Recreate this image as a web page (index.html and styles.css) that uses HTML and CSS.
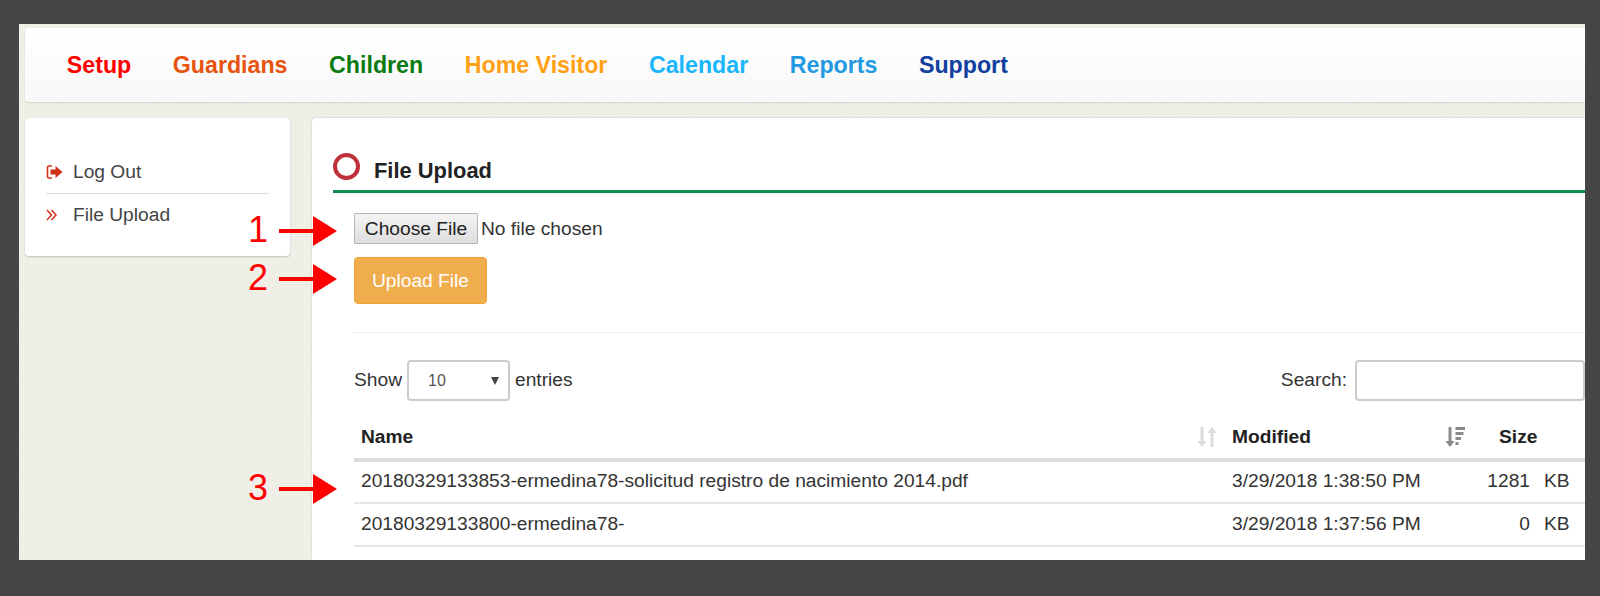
FILE: index.html
```html
<!DOCTYPE html>
<html lang="en">
<head>
    <meta charset="UTF-8">
    <meta name="viewport" content="width=device-width, initial-scale=1.0">
    <title>File Upload</title>
    <link rel="stylesheet" href="styles.css">
</head>
<body>
    <div class="frame">
        <!-- top menu -->
        <nav class="topnav">
            <a class="nav-setup" href="#">Setup</a>
            <a class="nav-guardians" href="#">Guardians</a>
            <a class="nav-children" href="#">Children</a>
            <a class="nav-visitor" href="#">Home Visitor</a>
            <a class="nav-calendar" href="#">Calendar</a>
            <a class="nav-reports" href="#">Reports</a>
            <a class="nav-support" href="#">Support</a>
        </nav>

        <div class="columns">
            <!-- side menu -->
            <aside class="sidebar">
                <a class="side-item side-item-first" href="#">
                    <svg class="side-icon" width="17" height="16" viewBox="0 0 17 16">
                        <path d="M6 2H3Q1.500 2 1.500 3.500V12.500Q1.500 14 3 14H6" fill="none" stroke="#d0311a" stroke-width="1.600"/>
                        <path d="M4.500 5.500H9.500V2L16.500 8L9.500 14V10.500H4.500Z" fill="#d0311a"/>
                    </svg>
                    Log Out
                </a>
                <a class="side-item" href="#">
                    <svg class="side-icon" width="17" height="16" viewBox="0 0 17 16">
                        <path d="M1 3L5.500 8L1 13M5.500 3L10 8L5.500 13" fill="none" stroke="#d0311a" stroke-width="1.500"/>
                    </svg>
                    File Upload
                </a>
            </aside>

            <main class="content">
                <h2 class="page-title"><span class="title-ring"></span>File Upload</h2>

                <div class="panel">
                    <input class="file-input" type="file">
                    <button class="upload-btn" type="button">Upload File</button>
                    <hr class="divider">

                    <div class="table-tools">
                        <label class="tool">Show
                            <span class="select-box">
                                <select class="entries">
                                    <option>10</option>
                                    <option>25</option>
                                    <option>50</option>
                                </select>
                            </span>
                            entries
                        </label>
                        <label class="tool">Search:
                            <input class="search" type="text">
                        </label>
                    </div>

                    <table class="files">
                        <colgroup>
                            <col class="col-name">
                            <col class="col-modified">
                            <col class="col-size">
                        </colgroup>
                        <thead>
                            <tr>
                                <th>
                                    <div class="th-inner">Name
                                        <svg width="20" height="22" viewBox="0 0 20 22">
                                            <path d="M3.500 1H6.500V15H9.500L5 21L0.500 15H3.500Z" fill="#dcdcdc"/>
                                            <path d="M13.500 21H16.500V7H19.500L15 1L10.500 7H13.500Z" fill="#dcdcdc"/>
                                        </svg>
                                    </div>
                                </th>
                                <th>
                                    <div class="th-inner">Modified
                                        <svg width="20" height="22" viewBox="0 0 20 22">
                                            <path d="M3.500 1H6.500V15H9.500L5 21L0.500 15H3.500Z" fill="#8a8a8a"/>
                                            <path d="M10.500 1H20V4H10.500ZM10.500 6H18.500V9H10.500ZM10.500 11H16V14H10.500ZM10.500 16H13.500V19H10.500Z" fill="#8a8a8a"/>
                                        </svg>
                                    </div>
                                </th>
                                <th class="th-size">Size</th>
                            </tr>
                        </thead>
                        <tbody>
                            <tr>
                                <td>20180329133853-ermedina78-solicitud registro de nacimiento 2014.pdf</td>
                                <td>3/29/2018 1:38:50 PM</td>
                                <td><div class="size-cell"><span class="size-num">1281</span>KB</div></td>
                            </tr>
                            <tr>
                                <td>20180329133800-ermedina78-</td>
                                <td>3/29/2018 1:37:56 PM</td>
                                <td><div class="size-cell"><span class="size-num">0</span>KB</div></td>
                            </tr>
                        </tbody>
                    </table>
                </div>
            </main>
        </div>

        <!-- red callouts drawn on top of the page -->
        <div class="callout callout-1">
            <span class="callout-num">1</span>
            <svg width="58" height="30" viewBox="0 0 58 30"><path d="M0 13H34V0L58 15L34 30V17H0Z" fill="#ff0000"/></svg>
        </div>
        <div class="callout callout-2">
            <span class="callout-num">2</span>
            <svg width="58" height="30" viewBox="0 0 58 30"><path d="M0 13H34V0L58 15L34 30V17H0Z" fill="#ff0000"/></svg>
        </div>
        <div class="callout callout-3">
            <span class="callout-num">3</span>
            <svg width="58" height="30" viewBox="0 0 58 30"><path d="M0 13H34V0L58 15L34 30V17H0Z" fill="#ff0000"/></svg>
        </div>
    </div>
</body>
</html>
```

FILE: styles.css
```css
html, body {
    height: 100%;
}
body {
    margin: 0;
    padding: 24px 15px 36px 19px;
    box-sizing: border-box;
    background-color: #454545;
    font-family: "Liberation Sans", Arial, sans-serif;
    font-size: 19.2px;
    color: #333;
    overflow: hidden;
}
.frame {
    position: relative;
    height: 536px;
    padding: 4px 0 0 6px;
    box-sizing: border-box;
    background-color: #eeeee5;
    background-image: url("data:image/svg+xml,%3Csvg xmlns='http://www.w3.org/2000/svg' width='300' height='300'%3E%3Cfilter id='n'%3E%3CfeTurbulence type='fractalNoise' baseFrequency='0.7' numOctaves='2'/%3E%3CfeColorMatrix values='0 0 0 0 1 0 0 0 0 1 0 0 0 0 1 0 0 0 0.5 -0.1'/%3E%3C/filter%3E%3Crect width='300' height='300' filter='url(%23n)' opacity='0.35'/%3E%3C/svg%3E");
    overflow: hidden;
}

/* top menu */
.topnav {
    display: flex;
    align-items: center;
    height: 74px;
    padding-left: 21px;
    background: linear-gradient(to bottom, #fff, #f8f8f8);
    border-radius: 4px 0 0 4px;
    box-shadow: 0 1px 2px rgba(0, 0, 0, 0.12);
    font-size: 23.2px;
    font-weight: bold;
}
.topnav a {
    padding: 0 20.8px;
    text-decoration: none;
}
.nav-setup { color: #ff0000; }
.nav-guardians { color: #e6540f; }
.nav-children { color: #0a7a12; }
.nav-visitor { color: #ff9f14; }
.nav-calendar { color: #19b6fb; }
.nav-reports { color: #2399e2; }
.nav-support { color: #103f9f; }

.columns {
    display: flex;
    gap: 22px;
    margin-top: 16px;
}

/* side menu */
.sidebar {
    flex: 0 0 265px;
    height: 138px;
    padding: 33px 21px 0;
    box-sizing: border-box;
    background-color: #fff;
    border-radius: 4px;
    box-shadow: 0 1px 2px rgba(0, 0, 0, 0.2);
}
.side-item {
    display: flex;
    align-items: center;
    height: 42px;
    color: #444;
    text-decoration: none;
}
.side-item-first {
    border-bottom: 1px solid #ddd;
}
.side-icon {
    margin-right: 10px;
}

/* main card */
.content {
    flex: 1;
    min-width: 0;
    height: 442px;
    padding-top: 34px;
    box-sizing: border-box;
    background-color: #fff;
    border-radius: 4px 0 0 0;
    box-shadow: 0 0 2px rgba(0, 0, 0, 0.2);
}
.page-title {
    display: flex;
    align-items: center;
    height: 38px;
    margin: 0 0 0 21px;
    border-bottom: 3px solid #0f8a50;
    font-size: 21.9px;
    font-weight: bold;
    color: #222;
}
.title-ring {
    width: 27px;
    height: 27px;
    margin: 0 14px 9px 0;
    box-sizing: border-box;
    border: 4px solid #c0303a;
    border-radius: 50%;
}
.panel {
    padding: 20px 0 0 42px;
}
.file-input {
    display: block;
    height: 31px;
    font-family: "Liberation Sans", Arial, sans-serif;
    font-size: 19.2px;
    color: #333;
}
.file-input::file-selector-button {
    width: 124px;
    height: 31px;
    margin-right: 3px;
    background: linear-gradient(to bottom, #f4f4f4, #dedede);
    border: 1px solid #b5b5b5;
    border-radius: 1px;
    font: inherit;
    color: #222;
}
.upload-btn {
    display: block;
    width: 133px;
    height: 47px;
    margin-top: 13px;
    background-color: #f0ad4e;
    border: 1px solid #eea236;
    border-radius: 4px;
    font-family: "Liberation Sans", Arial, sans-serif;
    font-size: 19.2px;
    color: #fff;
}
.divider {
    height: 1px;
    margin: 28px 0 27px;
    background-color: #eee;
    border: 0;
}
.table-tools {
    display: flex;
    justify-content: space-between;
    height: 40px;
}
.tool {
    display: flex;
    align-items: center;
    gap: 5px;
}
.select-box {
    position: relative;
    display: block;
}
.select-box::after {
    content: "";
    position: absolute;
    top: 17px;
    right: 11px;
    border-top: 8px solid #444;
    border-left: 4px solid transparent;
    border-right: 4px solid transparent;
}
.entries {
    display: block;
    width: 103px;
    height: 41px;
    padding-left: 19px;
    appearance: none;
    background-color: #fff;
    border: 2px solid #ccc;
    border-radius: 4px;
    font-family: "Liberation Sans", Arial, sans-serif;
    font-size: 16px;
    color: #555;
}
.search {
    width: 230px;
    height: 41px;
    margin: 0 0 0 3px;
    box-sizing: border-box;
    border: 2px solid #ccc;
    border-radius: 4px;
}

/* file table */
.files {
    width: 100%;
    margin-top: 13px;
    border-collapse: collapse;
    table-layout: fixed;
}
.col-name { width: 871px; }
.col-modified { width: 248px; }
.files th {
    height: 47px;
    padding: 2px 8px 0 7px;
    border-bottom: 4px solid #ddd;
    box-sizing: border-box;
    text-align: left;
    font-weight: bold;
    color: #222;
}
.files th.th-size {
    padding-left: 26px;
}
.th-inner {
    display: flex;
    justify-content: space-between;
    align-items: center;
}
.files td {
    height: 43px;
    padding: 0 7px 2px;
    border-bottom: 2px solid #e6e6e6;
    box-sizing: border-box;
    color: #333;
}
.size-cell {
    display: flex;
    gap: 14px;
}
.size-num {
    width: 50px;
    text-align: right;
}

/* red callouts */
.callout {
    position: absolute;
    left: 229px;
    display: flex;
    align-items: center;
    gap: 11px;
    color: #ff0000;
    font-size: 36px;
    line-height: 30px;
}
.callout-num {
    width: 20px;
    margin-top: -3px;
    text-align: center;
}
.callout-1 { top: 192px; }
.callout-2 { top: 240px; }
.callout-3 { top: 450px; }
```
